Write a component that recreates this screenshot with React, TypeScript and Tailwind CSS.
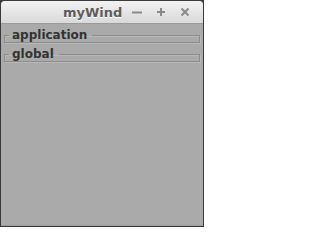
export default function App() {
  const groups = ["application", "global"];

  return (
    <div className="w-[204px] h-[227px] bg-[#3a3a3a] p-px font-['DejaVu_Sans',sans-serif]">
      <div className="flex flex-col h-full rounded-t-[4px] overflow-hidden bg-[#aaaaaa]">
        {/* title bar */}
        <div className="flex items-center h-[23px] shrink-0 bg-gradient-to-b from-[#f2f2f2] to-[#d9d9d9] border-b border-[#9a9a9a]">
          <span className="pl-[62px] text-[13px] leading-none font-bold text-[#5c5c5c] [text-shadow:0_1px_0_#ffffff]">
            myWind
          </span>
          <div className="flex items-center ml-auto mr-[13px] gap-[14px] text-[#8a8a8a]">
            <svg width="10" height="10" viewBox="0 0 10 10">
              <path d="M0 5.5h10" stroke="currentColor" strokeWidth="2" />
            </svg>
            <svg width="10" height="10" viewBox="0 0 10 10">
              <path d="M1 5h8M5 1v8" stroke="currentColor" strokeWidth="2" />
            </svg>
            <svg width="10" height="10" viewBox="0 0 10 10">
              <path d="M1.5 1.5l7 7M8.5 1.5l-7 7" stroke="currentColor" strokeWidth="2" />
            </svg>
          </div>
        </div>

        {/* content */}
        <div className="flex flex-col gap-[4px] px-[3px] pt-[4px] flex-1 border-b border-[#9c9c9c]">
          {groups.map((g) => (
            <fieldset
              key={g}
              className="border border-[#8c8c8c] shadow-[inset_1px_1px_0_#b8b8b8,1px_1px_0_#b8b8b8]"
            >
              <legend className="ml-[4px] pl-[3px] pr-[5px] text-[12px] leading-[14px] font-bold text-[#333333]">
                {g}
              </legend>
            </fieldset>
          ))}
        </div>
      </div>
    </div>
  );
}
